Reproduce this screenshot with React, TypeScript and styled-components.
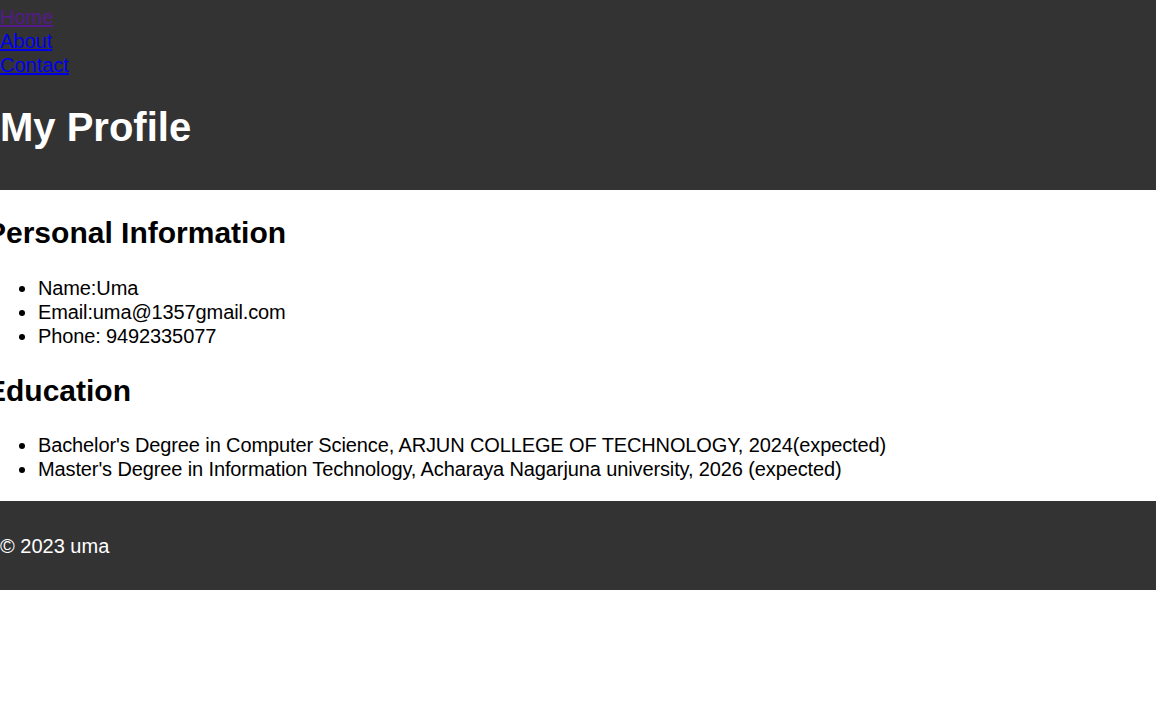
import React from "react";
import styled, { createGlobalStyle } from "styled-components";

const Global = createGlobalStyle`
  html, body { margin: 0; padding: 0; background: #fff; }
  body {
    font-family: "Liberation Sans", Arial, sans-serif;
    font-size: 20px;
    line-height: 24px;
    color: #000;
  }
`;

const Header = styled.header`
  background: #333;
  color: #fff;
  padding: 5px 0 13px;
`;

const NavList = styled.ul`
  list-style: none;
  margin: 0;
  padding: 0;
`;

const NavLink = styled.a<{ $visited?: boolean }>`
  color: ${(p) => (p.$visited ? "#551a8b" : "#0000ee")};
  text-decoration: underline;
`;

const Title = styled.h1`
  font-size: 40px;
  line-height: 46px;
  font-weight: bold;
  margin: 27px 0;
`;

const Main = styled.main``;

const SectionTitle = styled.h2`
  font-size: 30px;
  line-height: 35.5px;
  font-weight: bold;
  margin: 25px 0 25px -14px;
`;

const List = styled.ul`
  margin: 20px 0;
  padding-left: 38px;
  letter-spacing: -0.12px;
`;

const Footer = styled.footer`
  background: #333;
  color: #fff;
  padding: 13px 0 12px;
`;

const FooterText = styled.p`
  margin: 20px 0;
`;

export default function App() {
  return (
    <>
      <Global />
      <Header>
        <nav>
          <NavList>
            <li><NavLink href="#" $visited>Home</NavLink></li>
            <li><NavLink href="#">About</NavLink></li>
            <li><NavLink href="#">Contact</NavLink></li>
          </NavList>
        </nav>
        <Title>My Profile</Title>
      </Header>
      <Main>
        <section>
          <SectionTitle>Personal Information</SectionTitle>
          <List>
            <li>Name:Uma</li>
            <li>Email:uma@1357gmail.com</li>
            <li>Phone: 9492335077</li>
          </List>
        </section>
        <section>
          <SectionTitle>Education</SectionTitle>
          <List>
            <li>Bachelor's Degree in Computer Science, ARJUN COLLEGE OF TECHNOLOGY, 2024(expected)</li>
            <li>Master's Degree in Information Technology, Acharaya Nagarjuna university, 2026 (expected)</li>
          </List>
        </section>
      </Main>
      <Footer>
        <FooterText>© 2023 uma</FooterText>
      </Footer>
    </>
  );
}
